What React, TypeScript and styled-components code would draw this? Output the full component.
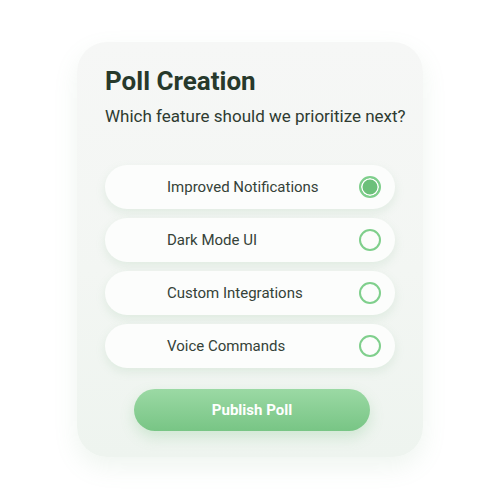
import styled, { createGlobalStyle } from "styled-components";

const GlobalStyle = createGlobalStyle`
  html, body {
    margin: 0;
    padding: 0;
    background: #ffffff;
  }
  body {
    font-family: Roboto, "Liberation Sans", sans-serif;
  }
`;

const Page = styled.div`
  width: 500px;
  height: 500px;
  display: flex;
  align-items: flex-start;
  justify-content: center;
  padding-top: 42px;
  box-sizing: border-box;
`;

const Card = styled.div`
  width: 346px;
  height: 415px;
  box-sizing: border-box;
  padding: 22px 18px 0 28px;
  border-radius: 30px;
  background: linear-gradient(180deg, #f6f7f6 0%, #f3f6f3 55%, #eef4ef 100%);
  box-shadow: 0 10px 24px rgba(120, 170, 130, 0.12);
  display: flex;
  flex-direction: column;
`;

const Title = styled.h1`
  margin: 0;
  font-size: 26px;
  font-weight: 700;
  color: #27392b;
  line-height: 34px;
`;

const Subtitle = styled.p`
  margin: 6px 0 0 0;
  font-size: 17px;
  font-weight: 400;
  color: #2e3b31;
  line-height: 24px;
  white-space: nowrap;
`;

const Options = styled.div`
  display: flex;
  flex-direction: column;
  gap: 9px;
  margin-top: 37px;
  width: 290px;
`;

const Option = styled.div`
  height: 44px;
  border-radius: 22px;
  background: #fcfdfc;
  box-shadow: 0 4px 10px rgba(140, 190, 150, 0.18);
  display: flex;
  align-items: center;
  padding: 0 14px 0 62px;
  box-sizing: border-box;
`;

const Label = styled.span`
  flex: 1;
  font-size: 15px;
  color: #354238;
`;

const Radio = styled.span<{ $checked?: boolean }>`
  width: 22px;
  height: 22px;
  border-radius: 50%;
  box-sizing: border-box;
  border: 2px solid #7fcf8c;
  background: ${(p) => (p.$checked ? "#6cc07a" : "transparent")};
  box-shadow: ${(p) => (p.$checked ? "inset 0 0 0 1.5px #ffffff" : "none")};
`;

const Publish = styled.button`
  align-self: flex-start;
  margin: 21px 0 0 29px;
  width: 236px;
  height: 42px;
  border: none;
  border-radius: 21px;
  background: linear-gradient(180deg, #9bd9a4 0%, #78c585 100%);
  box-shadow: 0 6px 14px rgba(110, 190, 125, 0.25);
  color: #ffffff;
  font-family: Roboto, "Liberation Sans", sans-serif;
  font-size: 15px;
  font-weight: 700;
  cursor: pointer;
`;

const options = [
  { label: "Improved Notifications", checked: true },
  { label: "Dark Mode UI", checked: false },
  { label: "Custom Integrations", checked: false },
  { label: "Voice Commands", checked: false },
];

export default function App() {
  return (
    <>
      <GlobalStyle />
      <Page>
        <Card>
          <Title>Poll Creation</Title>
          <Subtitle>Which feature should we prioritize next?</Subtitle>
          <Options>
            {options.map((o) => (
              <Option key={o.label}>
                <Label>{o.label}</Label>
                <Radio $checked={o.checked} />
              </Option>
            ))}
          </Options>
          <Publish>Publish Poll</Publish>
        </Card>
      </Page>
    </>
  );
}
